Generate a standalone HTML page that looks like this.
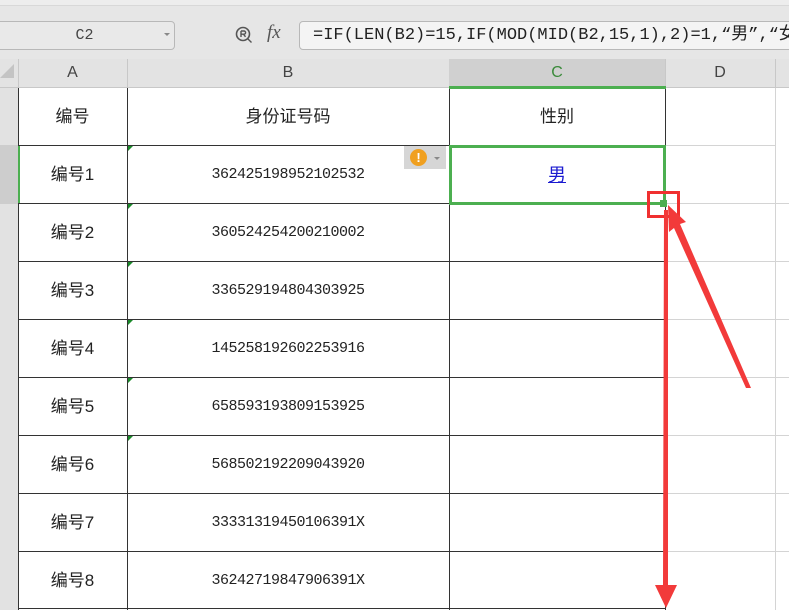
<!DOCTYPE html><html><head><meta charset="utf-8"><style>
body{margin:0;width:789px;height:610px;overflow:hidden;background:#fff;position:relative;font-family:"Liberation Sans","Noto Sans CJK SC",sans-serif}
div{position:absolute;box-sizing:border-box}
.t{font-size:17px;color:#222;text-align:center}
.n{font-size:15px;color:#222;text-align:center;font-family:"Liberation Mono","Noto Sans CJK SC",monospace;letter-spacing:-0.5px}
.tri{width:0;height:0;border-top:5px solid #1a8a2a;border-right:5px solid transparent}
</style></head><body>
<div style="left:0;top:0;width:789px;height:59px;background:#e6e6e6"></div>
<div style="left:0;top:0;width:789px;height:6px;background:#ededed;border-bottom:1px solid #d8d8d8"></div>
<div style="left:-6px;top:21px;width:181px;height:29px;border:1px solid #b8b8b8;border-radius:4px;background:#e9e9e9;font-size:15px;color:#444;text-align:center;line-height:27px;font-family:'Liberation Mono',monospace">C2</div>
<div style="left:164px;top:33px;width:0;height:0;border-left:3px solid transparent;border-right:3px solid transparent;border-top:3px solid #888"></div>
<svg style="position:absolute;left:234px;top:25px" width="22" height="22"><circle cx="9" cy="9" r="6.5" fill="none" stroke="#555" stroke-width="1.6"/><path d="M7 6v6M7 6h3a1.6 1.6 0 0 1 0 3.2H7M9.5 9.2l2 2.6M13.5 13.5l4 4" stroke="#555" stroke-width="1.4" fill="none"/></svg>
<div style="left:267px;top:22px;font-size:19px;font-style:italic;color:#555;font-family:'Liberation Serif',serif">fx</div>
<div style="left:299px;top:21px;width:500px;height:29px;border:1px solid #b8b8b8;border-radius:4px;background:#f4f4f4;overflow:hidden"></div>
<div style="left:313px;top:22px;width:476px;overflow:hidden;font-size:17px;line-height:27px;color:#222;white-space:nowrap;font-family:'Liberation Mono','Noto Sans CJK SC',monospace">=IF(LEN(B2)=15,IF(MOD(MID(B2,15,1),2)=1,“男”,“女”),IF(MOD</div>
<div style="left:0;top:59px;width:789px;height:29px;background:#e3e3e3;border-bottom:1px solid #c8c8c8"></div>
<div style="left:449px;top:59px;width:216px;height:29px;background:#d0d0d0"></div>
<div style="left:0;top:64px;width:0;height:0;border-left:14px solid transparent;border-bottom:14px solid #c4c4c4"></div>
<div style="left:18px;top:59px;width:1px;height:29px;background:#c8c8c8"></div>
<div style="left:127px;top:59px;width:1px;height:29px;background:#c8c8c8"></div>
<div style="left:665px;top:59px;width:1px;height:29px;background:#c8c8c8"></div>
<div style="left:775px;top:59px;width:1px;height:29px;background:#c8c8c8"></div>
<div style="left:18px;top:64px;width:109px;text-align:center;font-size:16px;color:#444">A</div>
<div style="left:127px;top:64px;width:322px;text-align:center;font-size:16px;color:#444">B</div>
<div style="left:449px;top:64px;width:216px;text-align:center;font-size:16px;color:#3a8a3a">C</div>
<div style="left:665px;top:64px;width:110px;text-align:center;font-size:16px;color:#444">D</div>
<div style="left:0;top:88px;width:18px;height:522px;background:#e2e2e2"></div>
<div style="left:0;top:145px;width:18px;height:59px;background:#cdcdcd"></div>
<div style="left:775px;top:88px;width:1px;height:522px;background:#d4d4d4"></div>
<div style="left:18px;top:88px;width:1px;height:522px;background:#333"></div>
<div style="left:127px;top:88px;width:1px;height:522px;background:#333"></div>
<div style="left:449px;top:88px;width:1px;height:522px;background:#333"></div>
<div style="left:665px;top:88px;width:1px;height:522px;background:#333"></div>
<div style="left:18px;top:145px;width:648px;height:1px;background:#333"></div>
<div style="left:18px;top:203px;width:648px;height:1px;background:#333"></div>
<div style="left:18px;top:261px;width:648px;height:1px;background:#333"></div>
<div style="left:18px;top:319px;width:648px;height:1px;background:#333"></div>
<div style="left:18px;top:377px;width:648px;height:1px;background:#333"></div>
<div style="left:18px;top:435px;width:648px;height:1px;background:#333"></div>
<div style="left:18px;top:493px;width:648px;height:1px;background:#333"></div>
<div style="left:18px;top:551px;width:648px;height:1px;background:#333"></div>
<div style="left:18px;top:608px;width:648px;height:1px;background:#333"></div>
<div style="left:666px;top:145px;width:110px;height:1px;background:#d4d4d4"></div>
<div style="left:666px;top:203px;width:123px;height:1px;background:#d4d4d4"></div>
<div style="left:666px;top:261px;width:123px;height:1px;background:#d4d4d4"></div>
<div style="left:666px;top:319px;width:123px;height:1px;background:#d4d4d4"></div>
<div style="left:666px;top:377px;width:123px;height:1px;background:#d4d4d4"></div>
<div style="left:666px;top:435px;width:123px;height:1px;background:#d4d4d4"></div>
<div style="left:666px;top:493px;width:123px;height:1px;background:#d4d4d4"></div>
<div style="left:666px;top:551px;width:123px;height:1px;background:#d4d4d4"></div>
<div style="left:18px;top:88px;width:109px;height:57px;line-height:57px" class="t">编号</div>
<div style="left:127px;top:88px;width:322px;height:57px;line-height:57px" class="t">身份证号码</div>
<div style="left:449px;top:88px;width:216px;height:57px;line-height:57px" class="t">性别</div>
<div style="left:449px;top:86px;width:217px;height:3px;background:#4caf50"></div>
<div style="left:18px;top:146px;width:2px;height:57px;background:#4caf50"></div>
<div class="t" style="left:18px;top:146px;width:109px;line-height:58px">编号1</div>
<div class="t" style="left:18px;top:204px;width:109px;line-height:58px">编号2</div>
<div class="t" style="left:18px;top:262px;width:109px;line-height:58px">编号3</div>
<div class="t" style="left:18px;top:320px;width:109px;line-height:58px">编号4</div>
<div class="t" style="left:18px;top:378px;width:109px;line-height:58px">编号5</div>
<div class="t" style="left:18px;top:436px;width:109px;line-height:58px">编号6</div>
<div class="t" style="left:18px;top:494px;width:109px;line-height:58px">编号7</div>
<div class="t" style="left:18px;top:552px;width:109px;line-height:58px">编号8</div>
<div class="n" style="left:127px;top:146px;width:322px;line-height:58px">362425198952102532</div>
<div class="n" style="left:127px;top:204px;width:322px;line-height:58px">360524254200210002</div>
<div class="n" style="left:127px;top:262px;width:322px;line-height:58px">336529194804303925</div>
<div class="n" style="left:127px;top:320px;width:322px;line-height:58px">145258192602253916</div>
<div class="n" style="left:127px;top:378px;width:322px;line-height:58px">658593193809153925</div>
<div class="n" style="left:127px;top:436px;width:322px;line-height:58px">568502192209043920</div>
<div class="n" style="left:127px;top:494px;width:322px;line-height:58px">33331319450106391X</div>
<div class="n" style="left:127px;top:552px;width:322px;line-height:58px">36242719847906391X</div>
<div class="tri" style="left:128px;top:146px"></div><div class="tri" style="left:128px;top:204px"></div><div class="tri" style="left:128px;top:262px"></div><div class="tri" style="left:128px;top:320px"></div><div class="tri" style="left:128px;top:378px"></div><div class="tri" style="left:128px;top:436px"></div>
<div style="left:404px;top:146px;width:42px;height:23px;background:#d6d6d6"></div>
<div style="left:410px;top:149px;width:17px;height:17px;border-radius:50%;background:#f0a020;color:#fff;font-size:13px;font-weight:bold;text-align:center;line-height:17px">!</div>
<div style="left:434px;top:157px;width:0;height:0;border-left:3px solid transparent;border-right:3px solid transparent;border-top:3px solid #888"></div>
<div style="left:449px;top:145px;width:217px;height:60px;border:3px solid #4caf50"></div>
<div style="left:449px;top:146px;width:216px;line-height:58px;text-align:center;font-size:18px;color:#1a1ad0;text-decoration:underline">男</div>
<div style="left:660px;top:200px;width:7px;height:7px;background:#4caf50"></div>
<div style="left:647px;top:191px;width:33px;height:27px;border:3px solid #f03030"></div>
<svg style="position:absolute;left:0;top:0" width="789" height="610">
<polygon points="668,205 686,222 680,224 751,388 746,388 674,228 669,232" fill="#f23a3a"/>
<polygon points="664,210 668,210 668,585 677,585 666,608 655,585 663,585" fill="#f23a3a"/>
</svg>
</body></html>
